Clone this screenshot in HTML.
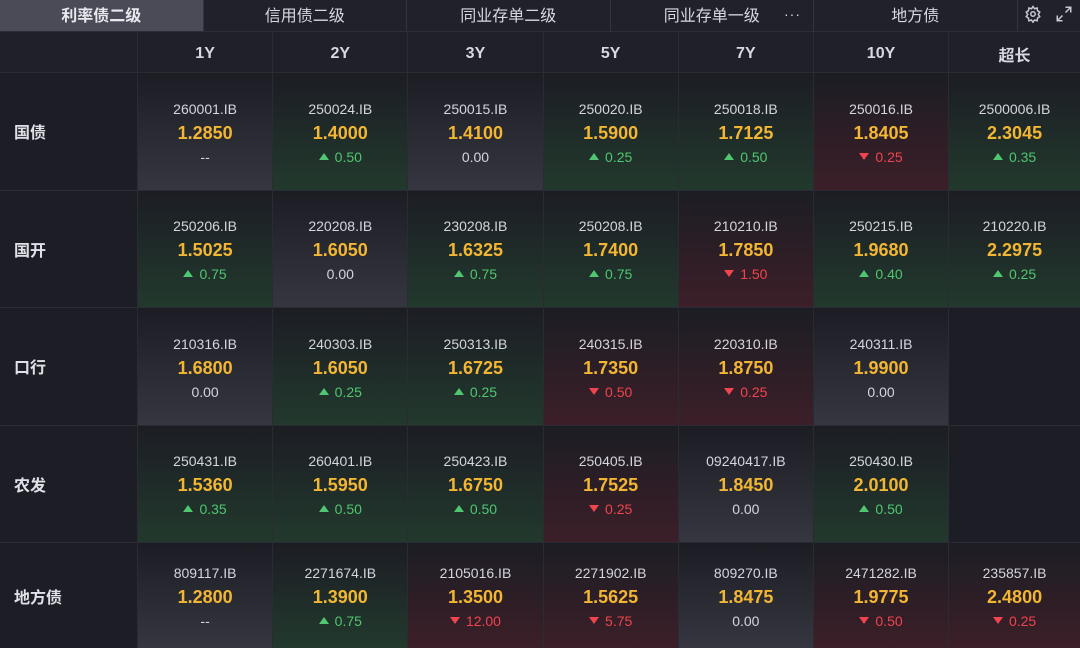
<!DOCTYPE html>
<html><head><meta charset="utf-8"><style>
*{margin:0;padding:0;box-sizing:border-box}
body{width:1080px;height:648px;overflow:hidden;background:#1b1c22;font-family:"Liberation Sans","Noto Sans CJK SC",sans-serif;color:#d4d5dc}
.tabs{display:flex;height:32px;background:#1b1c22;border-bottom:1px solid #2c2d35}
.tab{width:203.5px;display:flex;align-items:center;justify-content:center;font-size:16px;color:#d8d9e0;background:#20212a;border-right:1px solid #34353d;position:relative;padding-bottom:3px}
.tab.on{background:#4a4b57;color:#e8e8ee;font-weight:bold}
.icons{flex:1;display:flex;align-items:center;justify-content:space-around;background:#20212a;padding-bottom:3px}
.grid{display:grid;grid-template-columns:137px repeat(6,134.2px) 1fr;grid-template-rows:40px repeat(4,116.5px) 105px;gap:1px;background:#2a2b33}
.h{background:#1f2028;display:flex;align-items:center;justify-content:center;font-weight:bold;font-size:16px;color:#d8d9e0;padding-top:3px}
.l{background:#1d1e25;display:flex;align-items:center;padding-left:14px;font-weight:bold;font-size:16px;color:#e0e1e8}
.c{display:flex;flex-direction:column;align-items:center;justify-content:center;padding-top:3px}
.n{background:linear-gradient(#1c1d24,#35363f)}
.g{background:linear-gradient(#1c1d24,#22392d)}
.r{background:linear-gradient(#1c1d24,#3c1f28)}
.e{background:#1d1e25}
.code{font-size:14px;color:#d4d5de;line-height:22px}
.v{font-size:18px;font-weight:bold;color:#f2b632;line-height:26px}
.d{font-size:14px;line-height:22px;color:#d4d5de}
.up{color:#4fc66f}.dn{color:#f0444e}
.up:before{content:"";display:inline-block;border:5px solid transparent;border-bottom:7px solid #4fc66f;border-top:0;margin-right:6px;vertical-align:2px}
.dn:before{content:"";display:inline-block;border:5px solid transparent;border-top:7px solid #f0444e;border-bottom:0;margin-right:6px;vertical-align:2px}
</style></head><body>
<div class="tabs">
<div class="tab on">利率债二级</div><div class="tab">信用债二级</div><div class="tab">同业存单二级</div><div class="tab">同业存单一级<span style="position:absolute;right:12px;font-size:14px;letter-spacing:1px">···</span></div><div class="tab">地方债</div>
<div class="icons">
<svg width="18" height="18" viewBox="0 0 24 24" fill="none" stroke="#c8c9d0" stroke-width="2"><circle cx="12" cy="12" r="3"/><path d="M12 2l2 3 3.5-1 .5 3.5 3 2-2 3 2 3-3 2-.5 3.5-3.5-1-2 3-2-3-3.5 1-.5-3.5-3-2 2-3-2-3 3-2 .5-3.5 3.5 1z"/></svg>
<svg width="18" height="18" viewBox="0 0 24 24" fill="none" stroke="#c8c9d0" stroke-width="2"><path d="M14 3h7v7M21 3l-7 7M10 21H3v-7M3 21l7-7"/></svg>
</div></div>
<div class="grid">
<div class="h"></div><div class="h">1Y</div><div class="h">2Y</div><div class="h">3Y</div><div class="h">5Y</div><div class="h">7Y</div><div class="h">10Y</div><div class="h">超长</div>

<div class="l">国债</div>
<div class="c n"><div class="code">260001.IB</div><div class="v">1.2850</div><div class="d">--</div></div>
<div class="c g"><div class="code">250024.IB</div><div class="v">1.4000</div><div class="d up">0.50</div></div>
<div class="c n"><div class="code">250015.IB</div><div class="v">1.4100</div><div class="d">0.00</div></div>
<div class="c g"><div class="code">250020.IB</div><div class="v">1.5900</div><div class="d up">0.25</div></div>
<div class="c g"><div class="code">250018.IB</div><div class="v">1.7125</div><div class="d up">0.50</div></div>
<div class="c r"><div class="code">250016.IB</div><div class="v">1.8405</div><div class="d dn">0.25</div></div>
<div class="c g"><div class="code">2500006.IB</div><div class="v">2.3045</div><div class="d up">0.35</div></div>

<div class="l">国开</div>
<div class="c g"><div class="code">250206.IB</div><div class="v">1.5025</div><div class="d up">0.75</div></div>
<div class="c n"><div class="code">220208.IB</div><div class="v">1.6050</div><div class="d">0.00</div></div>
<div class="c g"><div class="code">230208.IB</div><div class="v">1.6325</div><div class="d up">0.75</div></div>
<div class="c g"><div class="code">250208.IB</div><div class="v">1.7400</div><div class="d up">0.75</div></div>
<div class="c r"><div class="code">210210.IB</div><div class="v">1.7850</div><div class="d dn">1.50</div></div>
<div class="c g"><div class="code">250215.IB</div><div class="v">1.9680</div><div class="d up">0.40</div></div>
<div class="c g"><div class="code">210220.IB</div><div class="v">2.2975</div><div class="d up">0.25</div></div>

<div class="l">口行</div>
<div class="c n"><div class="code">210316.IB</div><div class="v">1.6800</div><div class="d">0.00</div></div>
<div class="c g"><div class="code">240303.IB</div><div class="v">1.6050</div><div class="d up">0.25</div></div>
<div class="c g"><div class="code">250313.IB</div><div class="v">1.6725</div><div class="d up">0.25</div></div>
<div class="c r"><div class="code">240315.IB</div><div class="v">1.7350</div><div class="d dn">0.50</div></div>
<div class="c r"><div class="code">220310.IB</div><div class="v">1.8750</div><div class="d dn">0.25</div></div>
<div class="c n"><div class="code">240311.IB</div><div class="v">1.9900</div><div class="d">0.00</div></div>
<div class="e"></div>

<div class="l">农发</div>
<div class="c g"><div class="code">250431.IB</div><div class="v">1.5360</div><div class="d up">0.35</div></div>
<div class="c g"><div class="code">260401.IB</div><div class="v">1.5950</div><div class="d up">0.50</div></div>
<div class="c g"><div class="code">250423.IB</div><div class="v">1.6750</div><div class="d up">0.50</div></div>
<div class="c r"><div class="code">250405.IB</div><div class="v">1.7525</div><div class="d dn">0.25</div></div>
<div class="c n"><div class="code">09240417.IB</div><div class="v">1.8450</div><div class="d">0.00</div></div>
<div class="c g"><div class="code">250430.IB</div><div class="v">2.0100</div><div class="d up">0.50</div></div>
<div class="e"></div>

<div class="l">地方债</div>
<div class="c n"><div class="code">809117.IB</div><div class="v">1.2800</div><div class="d">--</div></div>
<div class="c g"><div class="code">2271674.IB</div><div class="v">1.3900</div><div class="d up">0.75</div></div>
<div class="c r"><div class="code">2105016.IB</div><div class="v">1.3500</div><div class="d dn">12.00</div></div>
<div class="c r"><div class="code">2271902.IB</div><div class="v">1.5625</div><div class="d dn">5.75</div></div>
<div class="c n"><div class="code">809270.IB</div><div class="v">1.8475</div><div class="d">0.00</div></div>
<div class="c r"><div class="code">2471282.IB</div><div class="v">1.9775</div><div class="d dn">0.50</div></div>
<div class="c r"><div class="code">235857.IB</div><div class="v">2.4800</div><div class="d dn">0.25</div></div>
</div>
</body></html>
